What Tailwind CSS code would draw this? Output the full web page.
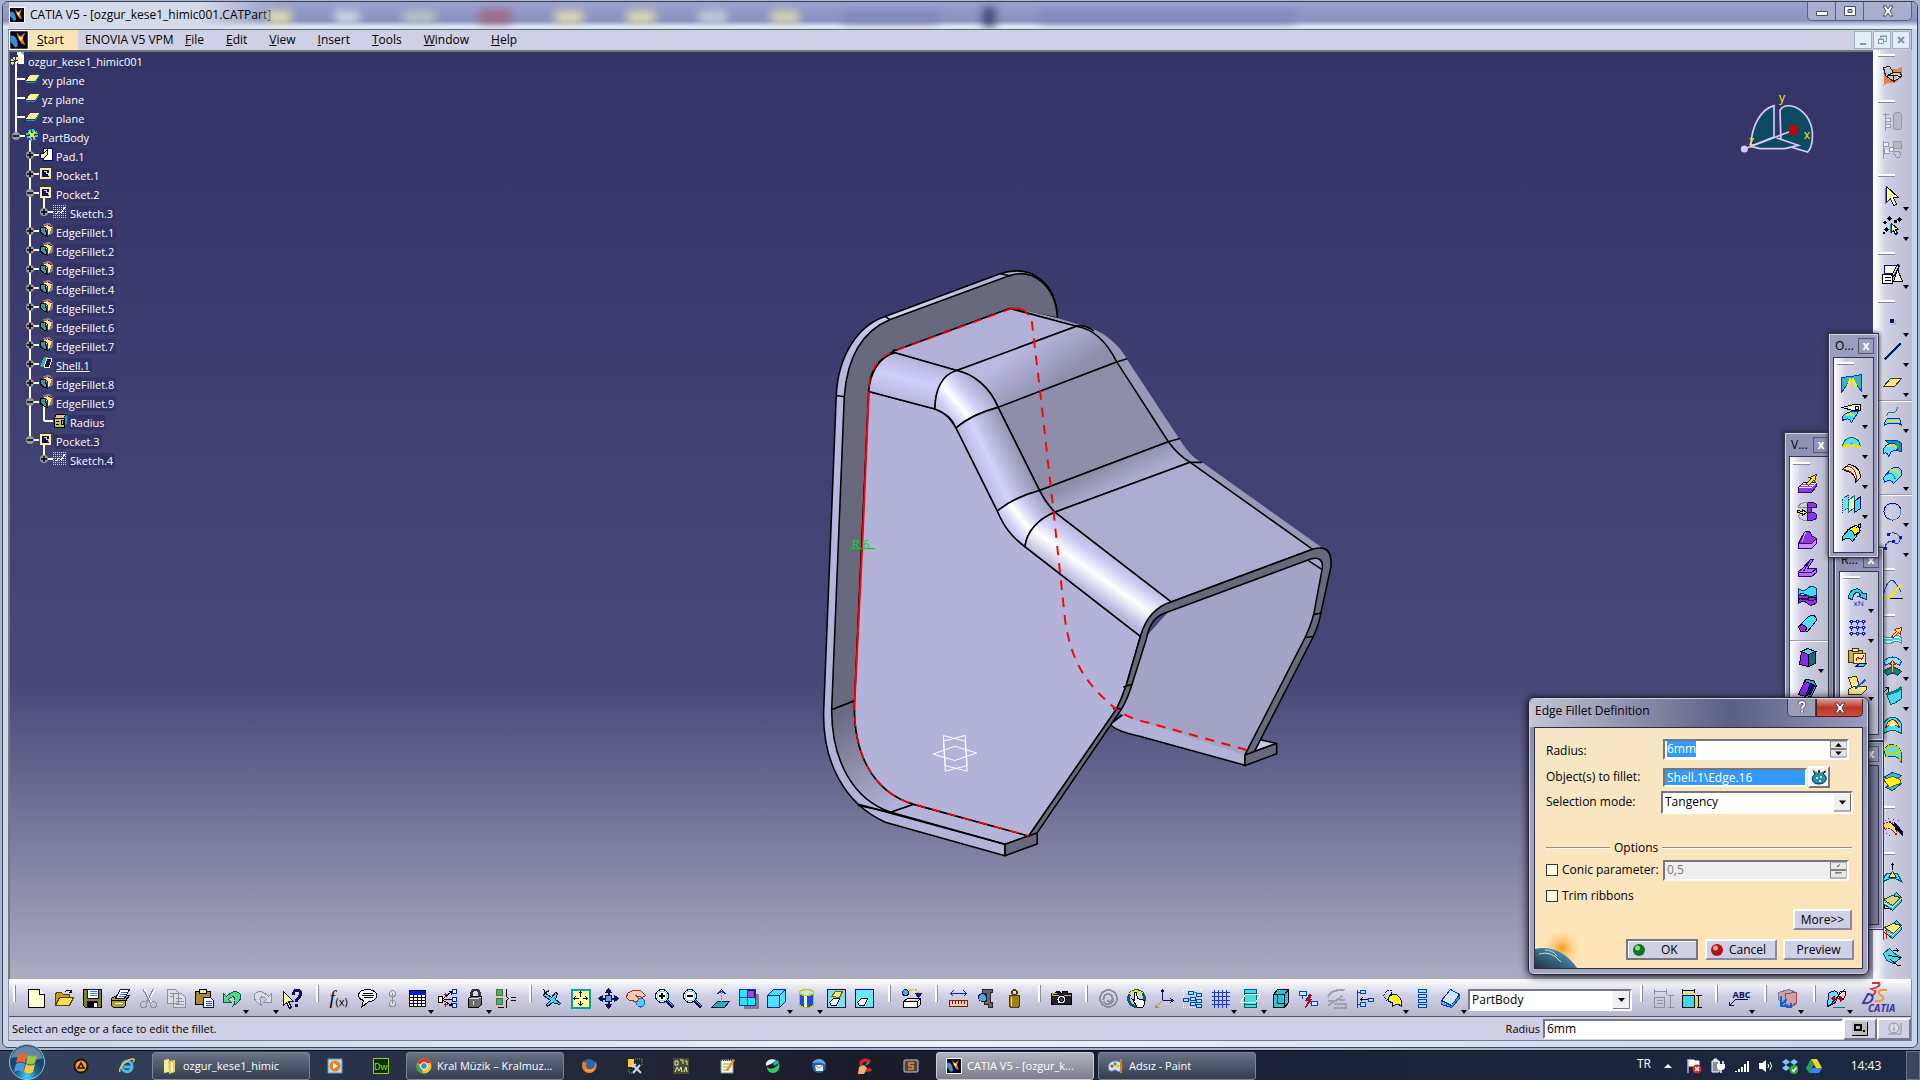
<!DOCTYPE html>
<html lang="en">
<head>
    <meta charset="UTF-8">
    <meta name="viewport" content="width=device-width, initial-scale=1.0">
    <title>CATIA V5 - [ozgur_kese1_himic001.CATPart]</title>
    <script src="https://cdn.jsdelivr.net/npm/@tailwindcss/browser@4"></script>
</head>
<body class="h-screen flex flex-col overflow-hidden bg-[#aab4cc] font-['Open_Sans','Noto_Sans',sans-serif] text-[12px] leading-4 text-black">

    <!-- application window -->
    <div class="flex-1 min-h-0 flex flex-col mx-[2px] mt-px mb-[2px] border border-[#3c4257] rounded-[6px] px-[5px] pb-[6px] bg-[#dfe8f5] bg-linear-to-r from-[#c9d6ea] via-[#eef2f8] to-[#c4d6ee]">
        <header class="h-[27px] shrink-0 -mx-[5px] pl-[6px] flex items-start overflow-hidden rounded-t-[5px] bg-linear-to-b from-[#9aa0cc] from-5% via-[#8b90c0] via-70% to-[#dbe7f6] to-90%">
            <div class="flex items-center gap-[5px] h-[26px] w-[270px] shrink-0 bg-linear-to-r from-[#d5dae8] from-70% to-transparent">
                <svg viewBox="0 0 16 16" class="size-4"><use href="#catia"/></svg>
                <h1 class="whitespace-nowrap">CATIA V5 - [ozgur_kese1_himic001.CATPart]</h1>
            </div>
            <div class="flex-1 flex items-center gap-11 h-[30px] -ml-3 blur-[5px]">
                <span class="w-6 h-3 bg-[#e8e3a8]"></span>
                <span class="w-6 h-3 bg-[#d4dbea]"></span>
                <span class="w-8 h-3 bg-[#b9c9c6]"></span>
                <span class="w-8 h-3 bg-[#a0647c]"></span>
                <span class="w-7 h-3 bg-[#e4dfb0]"></span>
                <span class="w-7 h-3 bg-[#e4dfb0]"></span>
                <span class="w-7 h-3 bg-[#c9cfdf]"></span>
                <span class="w-7 h-3 bg-[#dcd9b4]"></span>
                <span class="w-24 h-3 bg-[#7f87bb]"></span>
                <span class="w-3 h-5 bg-[#40476f]"></span>
                <span class="w-64 h-3 bg-[#8088bd]"></span>
            </div>
            <div class="flex h-[19px] mr-[5px] border border-t-0 border-[#5b6080] rounded-b-[5px] divide-x divide-[#5b6080] bg-[#a9aecf]">
                <button aria-label="Minimize" class="w-7 flex items-center justify-center"><svg viewBox="0 0 14 12" class="w-[14px] h-3"><path d="M1.500 6.500h11v4h-11z" fill="#fff" stroke="#4a4f66"/></svg></button>
                <button aria-label="Maximize" class="w-7 flex items-center justify-center"><svg viewBox="0 0 14 12" class="w-[14px] h-3"><path d="M1.500 1.500h11v9h-11zM5 4.500v3h4v-3z" fill="#fff" fill-rule="evenodd" stroke="#4a4f66"/></svg></button>
                <button aria-label="Close" class="w-[47px] flex items-center justify-center"><svg viewBox="0 0 14 12" class="w-[14px] h-3"><path d="M2 1h3l2 3 2-3h3l-3 5 3 5H9L7 8l-2 3H2l3-5z" fill="#fff" stroke="#4a4f66"/></svg></button>
            </div>
        </header>

        <nav class="h-[21px] shrink-0 flex items-center border-t border-x border-t-[#5c6b6b] border-x-[#8a90a4] bg-[#cfcfe5]">
            <svg viewBox="0 0 16 16" class="size-5"><use href="#catia"/></svg>
            <a href="#" class="h-[20px] leading-[19px] w-[49px] pl-2 bg-[#fde3b3]"><u>S</u>tart</a>
            <a href="#" class="pl-[7px] w-[96px] whitespace-nowrap">ENOVIA V5 VPM</a>
            <a href="#" class="px-[11px]"><u>F</u>ile</a>
            <a href="#" class="px-[11px]"><u>E</u>dit</a>
            <a href="#" class="px-[11px]"><u>V</u>iew</a>
            <a href="#" class="px-[11px]"><u>I</u>nsert</a>
            <a href="#" class="px-[11px]"><u>T</u>ools</a>
            <a href="#" class="px-[11px]"><u>W</u>indow</a>
            <a href="#" class="px-[11px]"><u>H</u>elp</a>
            <div class="ml-auto flex gap-px mr-px">
                <button aria-label="Minimize document" class="size-[18px] border border-[#9db0c4] bg-[#e2effb]"><svg viewBox="0 0 16 16" class="size-4"><path d="M5 12h6" stroke="#8594a8" stroke-width="2"/></svg></button>
                <button aria-label="Restore document" class="size-[18px] border border-[#9db0c4] bg-[#e2effb]"><svg viewBox="0 0 16 16" class="size-4"><path d="M6.500 6V4.500h6v5H10M4.500 7.500h5v4h-5zM6 4h7M4 7h6" fill="none" stroke="#8594a8"/></svg></button>
                <button aria-label="Close document" class="size-[18px] border border-[#9db0c4] bg-[#e2effb]"><svg viewBox="0 0 16 16" class="size-4"><path d="M5 5l6 6M11 5l-6 6" stroke="#8594a8" stroke-width="2"/></svg></button>
            </div>
        </nav>

        <div class="flex-1 min-h-0 flex">
            <main class="relative flex-1 min-w-0 border-t-2 border-l-2 border-t-[#77776c] border-l-[#77777c] bg-linear-to-b from-[#333366] via-[#484878] via-68% to-[#acacc1]">
                <ul id="tree" class="text-white text-[11px]"></ul>

                <!-- part geometry -->
                <svg viewBox="0 0 600 620" class="absolute left-[770px] top-[198px] w-[600px] h-[620px]" fill="none">
                    <defs>
                        <linearGradient id="longFillet" gradientUnits="userSpaceOnUse" x1="870" y1="750" x2="795" y2="860">
                            <stop offset="0" stop-color="#acacd3"/><stop offset=".35" stop-color="#cdcdf4"/><stop offset=".62" stop-color="#ffffff"/><stop offset="1" stop-color="#b6b6de"/>
                        </linearGradient>
                        <linearGradient id="slopeFillet" gradientUnits="userSpaceOnUse" x1="505" y1="565" x2="625" y2="505">
                            <stop offset="0" stop-color="#b3b3da"/><stop offset=".4" stop-color="#d2d2fa"/><stop offset="1" stop-color="#9292b0"/>
                        </linearGradient>
                        <linearGradient id="topFillet" gradientUnits="userSpaceOnUse" x1="350" y1="270" x2="320" y2="385">
                            <stop offset="0" stop-color="#b1b1d8"/><stop offset=".5" stop-color="#cfcffa"/><stop offset="1" stop-color="#b3b3da"/>
                        </linearGradient>
                        <linearGradient id="bend" gradientUnits="userSpaceOnUse" x1="640" y1="245" x2="710" y2="345">
                            <stop offset="0" stop-color="#b8b8e0"/><stop offset="1" stop-color="#8f8fad"/>
                        </linearGradient>
                        <linearGradient id="concave" gradientUnits="userSpaceOnUse" x1="860" y1="545" x2="885" y2="600">
                            <stop offset="0" stop-color="#8e8eab"/><stop offset="1" stop-color="#acacd0"/>
                        </linearGradient>
                        <linearGradient id="shine" gradientUnits="userSpaceOnUse" x1="525" y1="335" x2="415" y2="430">
                            <stop offset="0" stop-color="#a6a6ca"/><stop offset=".35" stop-color="#d0d0f8"/><stop offset=".55" stop-color="#ffffff"/><stop offset=".75" stop-color="#d0d0f8"/><stop offset="1" stop-color="#b3b3da"/>
                        </linearGradient>
                        <linearGradient id="shine2" gradientUnits="userSpaceOnUse" x1="700" y1="635" x2="590" y2="725">
                            <stop offset="0" stop-color="#9c9cbe"/><stop offset=".35" stop-color="#cacaf2"/><stop offset=".58" stop-color="#ffffff"/><stop offset=".78" stop-color="#cecef6"/><stop offset="1" stop-color="#b3b3da"/>
                        </linearGradient>
                        <linearGradient id="foot" gradientUnits="userSpaceOnUse" x1="165" y1="1170" x2="300" y2="1410">
                            <stop offset="0" stop-color="#6a6a80"/><stop offset="1" stop-color="#b3b3da"/>
                        </linearGradient>
                        <linearGradient id="rim" gradientUnits="userSpaceOnUse" x1="150" y1="1100" x2="400" y2="60">
                            <stop offset="0" stop-color="#b3b3da"/><stop offset=".78" stop-color="#b8b8e0"/><stop offset=".9" stop-color="#d4d4fc"/><stop offset="1" stop-color="#b4b4da"/>
                        </linearGradient>
                    </defs>
                    <g transform="scale(.38265 .39541)" stroke="#000" stroke-width="4" stroke-linejoin="round">
                        <!-- flange -->
                        <path d="M588 1532L275 1447C165 1400 112 1290 114 1170L147 368C152 265 205 190 275 168L575 60C655 35 722 80 725 172L650 240 200 400 350 1402 588 1503z" fill="url(#rim)"/>
                        <path d="M135 1163L168 370C176 270 215 205 288 176L590 68C660 40 720 90 725 172L605 148 300 255C245 280 232 320 232 358L195 1140z" fill="#69697e"/>
                        <path d="M135 1163C135 1290 190 1390 290 1422L350 1402C240 1370 190 1270 195 1140z" fill="url(#foot)"/>
                        <path d="M205 1405L290 1422 588 1503 650 1482 350 1402 290 1422z" fill="#b4b4da"/>
                        <path d="M205 1402L588 1503v29M147 368l21 3M275 168l12 8M575 60l30 6"/>
                        <path d="M588 1503L672 1474v28L588 1532z" fill="#69697e"/>
                        <!-- inside and right foot -->
                        <path d="M862 1200C880 1215 900 1220 940 1230L1215 1303V1260L930 1150z" fill="#b2b2d8"/>
                        <path d="M1215 1277L1252 1238 1298 1248 1215 1277z" fill="#c8c8ea"/>
                        <path d="M1215 1277L1298 1248V1274L1215 1304z" fill="#69697e"/>
                        <path d="M1015 915L1390 780C1415 775 1420 790 1417 806L1395 920C1390 950 1380 975 1370 985L1215 1277 960 1197C920 1190 900 1180 870 1160L920 1098 950 985z" fill="#a3a3c6" stroke="none"/>
                        <!-- right hand rounded edge -->
                        <path d="M605 148L650 155 725 172 795 193C850 205 890 245 907 277L1045 480C1065 510 1080 527 1103 537L1415 752 1392 757 1072 537C1045 520 1030 505 1015 485L880 283C860 240 820 200 775 193z" fill="#9898b8" stroke="none"/>
                        <path d="M770 193L620 152M770 193C795 188 815 200 820 205M880 283L907 275M1015 485L1045 477M1072 537L1103 537"/>
                        <!-- faces -->
                        <path d="M300 260C290 255 300 250 300 255L600 148 775 193 462 305z" fill="#b1b1d8"/>
                        <path d="M462 305L775 193C820 200 855 235 880 283L570 398C550 350 510 315 462 305z" fill="url(#bend)"/>
                        <path d="M570 398L880 283 1015 485 678 608z" fill="#8e8eab"/>
                        <path d="M678 608L1015 485C1030 505 1045 522 1072 537L718 663C700 645 688 628 678 608z" fill="url(#concave)"/>
                        <path d="M718 663L1072 537 1392 757 1022 890z" fill="#acacd1"/>
                        <path d="M232 358L405 402C440 415 450 435 460 450L568 660C590 705 610 728 640 750L942 977 905 1100C895 1130 885 1150 880 1160L650 1482 350 1402C240 1370 190 1270 195 1140z" fill="#b3b3da"/>
                        <path d="M232 358C235 310 260 270 300 260L462 305C420 320 405 360 405 402z" fill="url(#topFillet)"/>
                        <path d="M462 305C510 315 550 350 570 398 530 408 490 425 460 450 450 425 430 410 405 402 405 350 425 315 462 305z" fill="url(#shine)"/>
                        <path d="M460 450C490 425 530 408 570 398L678 608C640 618 600 635 568 660z" fill="url(#slopeFillet)"/>
                        <path d="M568 660C600 635 640 618 678 608 688 628 700 645 718 663 675 680 645 712 640 750 605 725 585 700 568 660z" fill="url(#shine2)"/>
                        <path d="M640 750C645 712 675 680 718 663L1022 890C980 910 955 940 942 977z" fill="url(#longFillet)"/>
                        <!-- wall section -->
                        <path d="M650 1482L880 1160C895 1130 900 1115 905 1100L942 977C955 930 985 900 1022 890L1392 757C1430 745 1442 765 1440 800L1413 920C1408 950 1400 965 1390 985L1240 1268 1215 1277 1370 985C1385 955 1390 940 1395 920L1417 806C1420 785 1410 775 1385 782L1015 915C980 925 965 945 957 985L920 1098C910 1130 905 1140 893 1160L672 1474z" fill="#69697e"/>
                        <path d="M897 1105l24-7M870 1160l24 0M1395 922l20-4M1375 980l20-3M1380 785l35 22"/>
                        <!-- selected edge -->
                        <path d="M605 148L300 255C245 275 232 320 232 358M195 1140C190 1270 240 1370 350 1402L650 1482" stroke="#f00" stroke-dasharray="24 18"/>
                        <path d="M232 358L215 750 195 1140" stroke="#f00" stroke-width="5"/>
                        <path d="M605 148C625 145 640 150 650 165" stroke="#f00"/>
                        <path d="M658 180L680 360 715 663 745 935C760 1040 800 1100 880 1162 900 1178 930 1188 960 1195L1240 1270" stroke="#f00" stroke-width="5" stroke-dasharray="24 20"/>
                        <!-- origin planes -->
                        <path d="M427 1228L484 1242 489 1318 432 1304zM484 1228L427 1242 432 1318 489 1304zM400 1275L457 1255 514 1272 457 1291z" stroke="#fff" stroke-width="2.500"/>
                        <path d="M183 755h65" stroke="#0c0" stroke-width="3"/>
                    </g>
                    <text x="72" y="299" fill="#00e000" font-size="12">R 6</text>
                </svg>

                <!-- compass -->
                <svg viewBox="780 265 222 195" class="absolute right-[59px] top-9 w-[74px] h-[65px] overflow-visible" fill="none" stroke="#d9c8ff" stroke-width="5">
                    <path d="M882 318V412L812 440C815 380 840 330 882 318zM900 332C910 315 930 317 945 322 985 340 1000 380 997 415 996 435 990 450 983 457L903 433z" fill="#0c4a60"/>
                    <path d="M812 440L840 447H915L955 437 890 415" fill="#0c4a60"/>
                    <path d="M793 448L940 392"/>
                    <circle cx="793" cy="448" r="8" fill="#d9c8ff"/>
                    <path d="M927 377h26v28h-26z" fill="#c80000" stroke="none"/>
                    <g fill="#ffe800" stroke="none" font-size="36"><text x="897" y="307">y</text><text x="971" y="417">x</text><text x="806" y="435">z</text></g>
                </svg>
            </main>
            <aside data-tools="| workbench | catalog catalog2 | select* trap* | sketcher* | dot* line* plane* - sweep* blend loft* - circle* spline* | curve | extrude* offset* join* dome dome2 slab | burn | push thick thick2 fold" data-dir="col" class="w-[39px] shrink-0 flex flex-col border-l-2 border-[#fff] bg-linear-to-r from-white via-[#cfcfe5] via-30% to-[#bcbcd2]"></aside>
        </div>

        <footer class="shrink-0 border-x border-[#8a90a4]">
            <div class="h-[38px] pt-1 flex items-center border-b border-[#55555f] bg-linear-to-b from-white via-[#cfcfe5] via-45% to-[#b6b6cc]">
                <div data-tools="| new open save print cut copy paste undo* redo* help | formula comment scale. table* relations lock* law | fly fit pan rotate zoomin zoomout normal multi cube* shading* hide swap | apply | measure caliper weight | camera | update touch axis struct grid* section* solid link unlink insert surface* list body*" data-dir="row" class="flex pl-1"></div>
                <div class="ml-px w-[164px] h-[22px] flex border-2 border-t-[#77778a] border-l-[#77778a] border-b-white border-r-white bg-white">
                    <select aria-label="Current body" class="flex-1 appearance-none pl-[2px] outline-none"><option>PartBody</option></select>
                    <svg viewBox="0 0 17 18" class="w-[17px] h-[18px]"><path d="M0 0h17v18H0z" fill="#f0f0f4"/><path d="M0 17.500h16.500V0" fill="none" stroke="#77778a"/><path d="M5 7h7l-3.500 4z"/></svg>
                </div>
                <div data-tools="| dimtable dims | text* | views* | analysis*" data-dir="row" class="flex ml-2"></div>
                <svg viewBox="0 0 42 34" class="ml-auto mr-2 -mt-1 w-[42px] h-[34px] shrink-0"><path d="M11 2h7c2 3-3 5-7 6 6 2 3 5-1 7" fill="none" stroke="#e02c34" stroke-width="2"/><path d="M7 13L2 22c9 2 14-9 5-9z" fill="none" stroke="#3a3a9a" stroke-width="2"/><path d="M26 9c-11-1-9 4-5 6 3 3 0 6-7 5" fill="none" stroke="#f59a1e" stroke-width="2"/><text x="7" y="31" font-size="10" font-weight="bold" font-style="italic" fill="#34349a">CATIA</text></svg>
            </div>
            <div class="h-6 flex items-center border-b border-[#77778a] bg-[#cfcfe5]">
                <p class="pl-[3px] flex-1 text-[11px]">Select an edge or a face to edit the fillet.</p>
                <label for="power" class="mr-[3px] text-[11px]">Radius</label>
                <input id="power" value="6mm" class="w-[300px] h-[20px] px-[2px] border-2 border-t-[#77778a] border-l-[#77778a] border-b-white border-r-white bg-white">
                <button aria-label="Power input" class="w-[34px] h-[22px] flex items-center justify-center border-2 border-white border-r-[#77778a] border-b-[#77778a]"><svg viewBox="0 0 16 14" class="w-4 h-[14px]"><path d="M0 0h16v14H0z" fill="#bcbcb8"/><path d="M0 13.500h15.500V0" stroke="#000" fill="none"/><path d="M3 3h6v5H3zM11 9h2" fill="none" stroke="#000" stroke-width="2"/></svg></button>
                <button aria-label="Info" class="w-[34px] h-[22px] flex items-center justify-center border-2 border-white border-r-[#77778a] border-b-[#77778a]"><svg viewBox="0 0 16 14" class="w-4 h-[14px]"><circle cx="8" cy="6" r="5" fill="#dcdce4" stroke="#8f8f9f"/><path d="M8 5v4M8 2.500v1M2 12h13V1" stroke="#8f8f9f" fill="none"/></svg></button>
            </div>
        </footer>
    </div>

    <!-- floating palettes -->
    <section class="absolute left-[1784px] top-[432px] w-[50px] h-[300px] border border-[#33364c] px-1 pt-px bg-[#8f92b5] shadow-[inset_0_0_0_1px_#d0d4e4,0_0_5px_#222]">
        <div class="h-[22px] flex items-center justify-between pl-[2px]"><h2>V...</h2><button aria-label="Close" class="size-4 border border-[#55586c] text-white leading-3 font-bold">x</button></div>
        <div data-tools="| pad revolve multi3 rib stack cyl - prism* shellsolid" data-dir="col" class="h-[272px] pt-px border border-[#33364c] bg-linear-to-r from-white via-[#cfcfe5] via-30% to-[#bcbcd2] flex flex-col"></div>
    </section>
    <section class="absolute left-[1850px] top-[741px] w-[34px] h-[189px] border border-[#33364c] px-1 pt-px bg-[#8f92b5] shadow-[inset_0_0_0_1px_#d0d4e4]">
        <div class="h-[22px] flex items-center justify-end"><button aria-label="Close" class="size-4 border border-[#55586c] text-white leading-3 font-bold">x</button></div>
        <div class="h-[160px] border border-[#33364c] bg-[#77779a]"></div>
    </section>
    <section class="absolute left-[1834px] top-[547px] w-[50px] h-[194px] border border-[#33364c] px-1 pt-px bg-[#8f92b5] shadow-[inset_0_0_0_1px_#d0d4e4,0_0_5px_#222]">
        <div class="h-[22px] flex items-center justify-between pl-[2px]"><h2>R...</h2><button aria-label="Close" class="size-4 border border-[#55586c] text-white leading-3 font-bold">x</button></div>
        <div data-tools="| repeat* pattern* clipboard powercopy*" data-dir="col" class="h-[164px] border border-[#33364c] bg-linear-to-r from-white via-[#cfcfe5] via-30% to-[#bcbcd2] flex flex-col"></div>
    </section>
    <section class="absolute left-[1828px] top-[333px] w-[51px] h-[225px] border border-[#33364c] px-1 pt-px bg-[#9a9dc0] shadow-[inset_0_0_0_1px_#d0d4e4,0_0_5px_#222]">
        <div class="h-[22px] flex items-center justify-between pl-[2px]"><h2>O...</h2><button aria-label="Close" class="size-4 border border-[#55586c] text-white leading-3 font-bold">x</button></div>
        <div data-tools="| heal* split* boundary* fillet* translate* extrapolate" data-dir="col" class="h-[196px] border border-[#33364c] bg-linear-to-r from-white via-[#cfcfe5] via-30% to-[#bcbcd2] flex flex-col"></div>
    </section>

    <!-- edge fillet dialog -->
    <form class="absolute left-[1528px] top-[697px] w-[341px] h-[278px] flex flex-col rounded-[6px] border border-[#20233a] px-[5px] pb-[5px] bg-linear-to-b from-[#8185a6] via-[#9fa3c2] via-40% to-[#a2a5c4] shadow-[inset_0_0_0_1px_#cfd3e4,0_1px_8px_#000]">
        <div class="h-7 shrink-0 flex items-start rounded-t-[5px] bg-linear-to-r from-[#c4c6d4] via-[#5b5e85] via-60% to-[#9a9dbf] -mx-1 mt-px">
            <h2 class="flex-1 pl-[5px] leading-[24px]">Edge Fillet Definition</h2>
            <button type="button" aria-label="Help" class="w-[29px] h-[18px] border border-t-0 border-[#3d405a] rounded-bl-[5px] bg-[#9b9db8] flex justify-center"><svg viewBox="0 0 12 14" class="w-3 h-[15px]"><path d="M3.500 5C3 1.500 9 1.500 8.500 5 8.500 7 6 7 6 9M6 11v2" fill="none" stroke="#44475c" stroke-width="3.500"/><path d="M3.500 5C3 1.500 9 1.500 8.500 5 8.500 7 6 7 6 9M6 11v2" fill="none" stroke="#fff" stroke-width="2"/></svg></button>
            <button type="button" aria-label="Close" class="w-[47px] h-[18px] mr-[4px] border border-t-0 border-[#4d1c20] rounded-br-[5px] bg-linear-to-b from-[#d99a92] via-[#b8352a] via-50% to-[#c9503c] flex justify-center items-center"><svg viewBox="0 0 14 12" class="w-[14px] h-3"><path d="M2 1h3l2 3 2-3h3l-3 5 3 5H9L7 8l-2 3H2l3-5z" fill="#fff" stroke="#5a3038"/></svg></button>
        </div>
        <div class="flex-1 min-h-0 flex flex-col border border-[#2c2c3a] bg-linear-to-b from-[#f6e6c6] to-[#ffe4b6] pl-[11px] pr-2 pt-[10px]">
            <div class="h-[22px] flex items-center">
                <label for="radius" class="w-[117px] pt-1">Radius:</label>
                <div class="w-[186px] h-[21px] flex border-2 border-t-[#77777a] border-l-[#77777a] border-b-white border-r-white bg-white">
                    <input id="radius" value="6mm" class="flex-1 min-w-0 px-[2px] outline-none selection:bg-[#3399ff] selection:text-white">
                    <svg viewBox="0 0 18 18" class="w-[18px]"><use href="#spin"/></svg>
                </div>
            </div>
            <div class="h-[26px] mt-[4px] flex items-center">
                <label for="objects" class="w-[117px]">Object(s) to fillet:</label>
                <input id="objects" value="Shell.1\Edge.16" class="w-[144px] h-[19px] px-[2px] border-2 border-t-[#77777a] border-l-[#77777a] border-b-white border-r-white bg-[#3399ff] text-white">
                <button type="button" aria-label="Element list" class="ml-px size-[22px] flex items-center justify-center border-2 border-t-white border-l-white border-r-[#77777a] border-b-[#77777a] bg-[#f4f4f8]"><svg viewBox="0 0 16 16" class="size-4"><path d="M2 1l5 3 1-3 1 3 6-2-3 3c6 3 3 10-4 10S-1 9 4 5z" fill="#1496b4" stroke="#10105a"/><path d="M2 1l5 3M13 2l-4 2" stroke="#f0e040"/><path d="M5 8h2v2H5zM9 7h2v2H9zM8 11h2v2H8z" fill="#ffe860"/></svg></button>
            </div>
            <div class="h-[24px] flex items-center">
                <label for="mode" class="w-[115px]">Selection mode:</label>
                <div class="w-[192px] h-[23px] flex border-2 border-t-[#77777a] border-l-[#77777a] border-b-white border-r-white bg-white">
                    <select id="mode" class="flex-1 appearance-none pl-[2px] outline-none"><option>Tangency</option></select>
                    <svg viewBox="0 0 17 18" class="w-[17px] h-[19px]"><path d="M0 0h17v18H0z" fill="#f0f0f0"/><path d="M0 17.500h16.500V0" fill="none" stroke="#666"/><path d="M5 7h7l-3.500 4z"/></svg>
                </div>
            </div>
            <div class="mt-[26px] h-4 flex items-center gap-1">
                <span class="w-16 h-[2px] border-t border-[#8e8e92] bg-white"></span>Options<span class="flex-1 h-[2px] mr-[2px] border-t border-[#8e8e92] bg-white"></span>
            </div>
            <div class="h-[26px] mt-px flex items-center">
                <input id="conic" type="checkbox" class="appearance-none size-3 border border-[#333] bg-[#ffffe0]">
                <label for="conic" class="w-[105px] pl-1 whitespace-nowrap">Conic parameter:</label>
                <div class="w-[186px] h-[21px] flex border-2 border-t-[#77777a] border-l-[#77777a] border-b-white border-r-white bg-[#efefef]">
                    <input aria-label="Conic value" value="0,5" disabled class="flex-1 min-w-0 px-[2px] text-[#7a7a7a]">
                    <svg viewBox="0 0 18 18" class="w-[18px]"><use href="#spinoff"/></svg>
                </div>
            </div>
            <div class="h-[26px] flex items-center">
                <input id="trim" type="checkbox" class="appearance-none size-3 border border-[#333] bg-[#ffffe0]">
                <label for="trim" class="pl-1">Trim ribbons</label>
            </div>
            <button type="button" class="self-end mr-[2px] w-[59px] h-[21px] border-2 border-t-white border-l-white border-r-[#8a8aa8] border-b-[#8a8aa8] bg-[#cfcfe5] leading-4">More&gt;&gt;</button>
            <div class="mt-auto flex items-start -ml-[11px] h-[29px]">
                <svg viewBox="0 0 46 36" class="self-end w-[46px] h-9 mr-auto shrink-0"><defs><radialGradient id="sun"><stop offset="0" stop-color="#f79a1c"/><stop offset="1" stop-color="#ffe0a0" stop-opacity="0"/></radialGradient><linearGradient id="earth" x1="0" y1="1" x2="1" y2="0"><stop offset="0" stop-color="#24303c"/><stop offset="1" stop-color="#4fb4dc"/></linearGradient></defs><circle cx="27" cy="16" r="20" fill="url(#sun)"/><path d="M0 17c16-4 32 4 42 19H0z" fill="url(#earth)"/><path d="M4 22q12-4 22 8M10 18q8 0 12 6" fill="none" stroke="#b8dcec"/></svg>
                <button type="button" class="w-[72px] h-[21px] mr-[7px] flex items-center pl-[5px] gap-4 border-2 border-[#77777f] bg-[#cfcfe5] shadow-[inset_1px_1px_0_#fff]"><svg viewBox="0 0 12 12" class="size-3"><circle cx="6" cy="6" r="6" fill="#0b7a18"/><circle cx="4.500" cy="4" r="2.500" fill="#7ee070"/></svg>OK</button>
                <button type="button" class="w-[72px] h-[21px] mr-[6px] flex items-center pl-[4px] gap-[6px] border-2 border-t-white border-l-white border-r-[#8a8aa8] border-b-[#8a8aa8] bg-[#cfcfe5]"><svg viewBox="0 0 12 12" class="size-3"><circle cx="6" cy="6" r="6" fill="#b01414"/><circle cx="4.500" cy="4" r="2.500" fill="#ffa090"/></svg>Cancel</button>
                <button type="button" class="w-[71px] h-[21px] border-2 border-t-white border-l-white border-r-[#8a8aa8] border-b-[#8a8aa8] bg-[#cfcfe5] leading-4">Preview</button>
            </div>
        </div>
    </form>

    <!-- taskbar -->
    <div class="h-[30px] shrink-0 flex items-center pl-2 border-t border-[#0c101c] bg-linear-to-r from-[#33425f] via-[#1b1c2a] via-45% to-[#1b2a44] text-white">
        <button aria-label="Start menu" class="size-[38px] -mt-2 mr-[14px] shrink-0"><svg viewBox="0 0 38 38" class="size-[38px]"><defs><radialGradient id="orb" cy=".9"><stop offset="0" stop-color="#38d8f8"/><stop offset=".6" stop-color="#1c6494"/><stop offset="1" stop-color="#16466e"/></radialGradient></defs><circle cx="19" cy="19" r="17.500" fill="url(#orb)" stroke="#9cc0d8"/><path d="M3 15C8-1 30-1 35 15 25 20 13 12 3 15z" fill="#fff" opacity=".35"/><path d="M10 12c3-2 6-2 9 0l-2 8c-3-2-6-2-9 0z" fill="#f0642c"/><path d="M20 12c3 2 6 2 9 0l-2 8c-3 2-6 2-9 0z" fill="#9cc83c"/><path d="M8 21c3-2 6-2 9 0l-2 8c-3-2-6-2-9 0z" fill="#4c9ce0"/><path d="M18 21c3 2 6 2 9 0l-2 8c-3 2-6 2-9 0z" fill="#fcc838"/></svg></button>
        <div id="tasks" class="flex gap-1 h-[28px] text-[11px]"></div>
        <div class="ml-auto flex items-center gap-2 h-full">
            <span class="mr-[5px] -mt-1">TR</span>
            <svg viewBox="0 0 8 8" class="size-2 mr-[6px]"><path d="M0 6l4-4 4 4z" fill="#fff"/></svg>
            <svg viewBox="0 0 16 16" class="size-4"><path d="M2 1v14M3 2h5l1 1h4v6H8L7 8H3z" stroke="#fff" fill="#fff"/><circle cx="11" cy="11" r="4.500" fill="#d82424"/><path d="M9 9l4 4M13 9l-4 4" stroke="#fff" stroke-width="1.500"/></svg>
            <svg viewBox="0 0 16 16" class="size-4"><path d="M2 3h7v11H2zM4 1h3v2H4z" stroke="#fff" fill="#8890a0"/><path d="M7 6h8v4l-2 2h-4l-2-2z" fill="#fff"/><path d="M9 6V3M13 6V3M11 12v3" stroke="#fff" stroke-width="1.500" fill="none"/></svg>
            <svg viewBox="0 0 16 16" class="size-4"><path d="M1 13h2v1H1zM4 11h2v3H4zM7 9h2v5H7zM10 6h2v8h-2zM13 3h2v11h-2z" fill="#fff"/></svg>
            <svg viewBox="0 0 16 16" class="size-4"><path d="M1 5h3l4-3v12l-4-3H1z" fill="#fff"/><path d="M10 6q1.500 2 0 4M12 4q3 4 0 8" stroke="#fff" fill="none"/></svg>
            <svg viewBox="0 0 16 16" class="size-4"><path d="M4 1l4 3-4 3-4-3zM12 1l4 3-4 3-4-3zM4 7l4 3-4 3-4-3zM12 7l4 3-4 3-4-3z" fill="#7cc8f8"/><circle cx="12" cy="11.500" r="4.500" fill="#2ca83c"/><path d="M10 11.500l1.500 2 3-4" stroke="#fff" stroke-width="1.500" fill="none"/></svg>
            <svg viewBox="0 0 16 16" class="size-4"><path d="M5 1h6l5 9h-6z" fill="#fcd024"/><path d="M5 1l3 5-5 9-3-5z" fill="#1ca464"/><path d="M3 15l3-5h10l-3 5z" fill="#4482f0"/></svg>
            <time class="w-[56px] ml-2 mr-1 text-center">14:43</time>
            <span class="w-[14px] h-full border border-[#6a7488] bg-[#3a465e]"></span>
        </div>
    </div>

    <svg class="hidden">
        <symbol id="catia" viewBox="0 0 16 16"><path d="M0 0h16v16H0z" fill="#fff"/><path d="M1 1h14v14H1z" fill="#04041c"/><path d="M1 5c3-2 6 2 6 8L5 14 1 9z" fill="#3a90d0"/><path d="M6 2l3 3 4-3-2 5 2 5-3-1-3-5z" fill="#e87020"/><path d="M8 5l3 1-1 3-2-2z" fill="#ffe890"/></symbol>
        <symbol id="spin" viewBox="0 0 18 18"><path d="M1 0h17v8H1zM1 9h17v8H1z" fill="#e4e4e4" stroke="#777"/><path d="M6 6h7L9.500 2zM6 11h7l-3.500 4z"/></symbol>
        <symbol id="spinoff" viewBox="0 0 18 18"><path d="M1 0h17v8H1zM1 9h17v8H1z" fill="#e8e8e8" stroke="#777"/><path d="M8 5l3-2M6 11.500h7" stroke="#333"/></symbol>
    </svg>

    <script>
        // 20x20 toolbar glyphs, default stroke is navy
        const icons = {
            new: '<path d="M2 1h11l5 5v13H2z" fill="#ffffd0" stroke="#000"/><path d="M13 1v5h5" fill="#fff" stroke="#000"/>',
            open: '<path d="M1 17V6l1-2h5l2 2h6v4" fill="#c89a18" stroke="#5c4400"/><path d="M1 17l4-8h14l-4 8z" fill="#ffdc50" stroke="#5c4400"/><path d="M11 3q4-3 6 1m0-3v3h-3" stroke="#000"/>',
            save: '<path d="M1 1h18v18H3l-2-2z" fill="#80801c" stroke="#000"/><path d="M5 1h11v9H5z" fill="#fff"/><path d="M7 3h7M7 5h7M7 7h7" stroke="#3a80e0"/><path d="M5 13h10v6H5z" fill="#000"/><path d="M11 14h3v4h-3z" fill="#fff" stroke="none"/>',
            print: '<path d="M1 10l5-3h13l-4 6v4l-2 2H3l-2-2z" fill="#a8a030" stroke="#000"/><path d="M5 10l5-9h9l-5 9z" fill="#fff"/><path d="M10 4h6M9 6h6M8 8h6" stroke="#3a60f0"/><path d="M1 12h14l4-5" stroke="#000"/><path d="M4 15h8" stroke="#ffffa0"/>',
            cut: '<g stroke="#8e8e9a"><path d="M5 1l7 13M15 1L8 14" stroke-width="2"/><circle cx="5" cy="16" r="3"/><circle cx="15" cy="16" r="3"/></g><path d="M6 1l7 13M16 1l-4 8" stroke="#fff"/>',
            copy: '<path d="M1 1h8l3 3v11H1zM7 5h8l4 4v10H7z" fill="#dcdce8" stroke="#8e8e9a"/><path d="M3 5h5M3 8h3M9 10h6M9 13h8M9 16h8" stroke="#8e8e9a"/>',
            paste: '<path d="M1 3h15v13H1z" fill="#a88c2c" stroke="#000"/><path d="M5 1h7v4H5z" fill="#e8e8a0" stroke="#000"/><path d="M9 9h7l3 3v7H9z" fill="#fff"/><path d="M11 13h6M11 15h6M11 17h6" stroke="#2040f0"/>',
            undo: '<path d="M1 5v9h8l-3-3c4-5 9-3 5 6 9-5 10-13 2-14-4 0-7 3-9 5z" fill="#50d890" stroke="#045c3c"/>',
            redo: '<path d="M19 5v9h-8l3-3C10 6 5 8 9 17 0 12-1 4 7 3c4 0 7 3 9 5z" fill="#dcdce8" stroke="#8e8e9a"/>',
            help: '<path d="M1 3v14l3-3 3 6 2-1-3-6h5z" fill="#ffff90"/><path d="M11 6C11 0 19 0 18 6c0 3-4 3-4 7M14 15v3" stroke-width="3"/>',
            formula: '<text x="0" y="15" font-size="19" font-style="italic" fill="#000" stroke="none" font-family="Liberation Serif">f</text><text x="6" y="17" font-size="11" fill="#000" stroke="none">(x)</text>',
            comment: '<path d="M10 1c12 0 12 12 1 12l-7 6 2-7C-3 9 1 1 10 1z" fill="#fff" stroke="#000"/><path d="M5 5h10M4 7h12M6 9h9" stroke="#000"/>',
            scale: '<g stroke="#8e8e9a" fill="#dcdce8"><circle cx="10" cy="5" r="3"/><circle cx="10" cy="15" r="3"/><path d="M10 4v11"/></g>',
            table: '<path d="M2 2h16v16H2z" fill="#fff" stroke="#000"/><path d="M2 4h16" stroke="#0018e8" stroke-width="4"/><path d="M2 9h16M2 12h16M2 15h16M6 6v12M10 6v12M14 6v12" stroke="#000"/>',
            relations: '<path d="M1 8h4v6H1z" fill="#ffff90" stroke="#000"/><path d="M6 10l8-7M6 11h8M6 12l8 5M11 3h3v3M11 17h3v-3" stroke="#000"/><path d="M15 1h4v4h-4zM15 9h4v4h-4zM15 15h4v4h-4z" fill="#fff" stroke="#0020f0"/><path d="M8 4v4M6 6h4M8 14v4M6 16h4" stroke="#e00000"/>',
            lock: '<path d="M6 9V5c0-5 8-5 8 0v4" stroke="#333" stroke-width="2.500"/><path d="M3 10l3-2h10v8l-3 3H3z" fill="#6c6c6c" stroke="#000"/><path d="M8 12v4M3 10h10l3-2" stroke="#ddd"/>',
            law: '<path d="M1 1h6v6H1zM1 10h6v6H1z" fill="#20b8a8" stroke="#7a6410"/><path d="M10 1h1v7l2 2-2 2v7h-1M15 9h5M15 12h5M2 19h6" stroke="#000"/>',
            fly: '<path d="M2 4l7 5 4-5 2 1-2 6 5 4-1 1-7-2-5 4-1-2 4-4-7-5z" fill="#30d8e8"/><path d="M1 1l2 3M1 7l2-3 4-2" stroke="#000"/>',
            fit: '<path d="M1 1h18v18H1z" fill="#ffff90" stroke="#00a0a8" stroke-width="2"/><path d="M10 3v5M8 5l2-2 2 2M10 17v-5M8 15l2 2 2-2M3 10h5M5 8l-2 2 2 2M17 10h-5M15 8l2 2-2 2" stroke="#000"/>',
            pan: '<path d="M10 1v18M1 10h18" stroke-width="2"/><path d="M10 0l3 4H7zM10 20l3-4H7zM0 10l4-3v6zM20 10l-4-3v6z" fill="#10105a"/><path d="M7 7h6v6H7z" fill="#58a8d8"/>',
            rotate: '<circle cx="14" cy="14" r="4.500" fill="#4cd0f8" stroke="#2060c0"/><path d="M1 5l5-3h8l5 5-3 2-7-2 3 3-1 3-8-1-3-3z" fill="#f8c8b0" stroke="#8c3818"/>',
            zoomin: '<circle cx="7.500" cy="7.500" r="6.500" fill="#fff"/><circle cx="7.500" cy="7.500" r="5" stroke="#60d8f0"/><path d="M4.500 7.500h6M7.500 4.500v6" stroke="#000" stroke-width="2"/><path d="M12 12l7 7" stroke-width="3.500"/><path d="M13 12l6 6" stroke="#40c8e0"/>',
            zoomout: '<circle cx="7.500" cy="7.500" r="6.500" fill="#fff"/><circle cx="7.500" cy="7.500" r="5" stroke="#60d8f0"/><path d="M4.500 7.500h6" stroke="#000" stroke-width="2"/><path d="M12 12l7 7" stroke-width="3.500"/><path d="M13 12l6 6" stroke="#40c8e0"/>',
            normal: '<path d="M1 19l6-6h12l-5 6z" fill="#20b0b0"/><path d="M11 14V4" stroke="#d08000" stroke-dasharray="2 1"/><path d="M7 5l4-4 4 4-4-2z" fill="#ffff60" stroke="#2020d0"/>',
            multi: '<path d="M5 5h15v15H5z" fill="#7c7c90" stroke="none"/><path d="M1 1h16v16H1z" fill="#20e8f8" stroke="#0030d0"/><path d="M9 2h7v7H9z" fill="#b840c8"/><path d="M9 1v16M1 9h16" stroke="#0030d0"/>',
            cube: '<path d="M1 7l6-6h12v12l-6 6H1z" fill="#50e0f8" stroke="#0020e8"/><path d="M1 7h12v12M13 7l6-6" stroke="#0020e8"/>',
            shading: '<path d="M3 4v12c0 4 14 4 14 0V4" fill="#1850d0" stroke="#e8e020" stroke-width="1.500"/><path d="M7 5v13h3V5z" fill="#e8f8f8" stroke="none"/><path d="M3 4v12c0 4 14 4 14 0V4" stroke="#c8b800"/><ellipse cx="10" cy="4" rx="7" ry="3" fill="#b8e8f0" stroke="#d8c800" stroke-width="1.500"/>',
            hide: '<path d="M1 1h18v18H1z" fill="#78e0f0"/><path d="M5 8l4-5h7l-3 6z" fill="#f8f080" stroke="#806000"/><path d="M3 14l4-4h6l-3 7H5z" fill="#fff" stroke="#000"/>',
            swap: '<path d="M1 1h18v18H1z" fill="#68e8f8"/><path d="M3 14l4-4h6l-3 7H5z" fill="#fff" stroke="#000"/>',
            apply: '<path d="M2 13l4-3h13v6l-3 3H2zM2 13h14l3-3M16 13v6" fill="#fff" stroke="#000"/><circle cx="4" cy="4" r="3" fill="#38b8d8"/><path d="M8 2q7-3 9 3" stroke="#d0c000" stroke-width="2" stroke-dasharray="2 1"/><path d="M14 5h6l-3 4z" fill="#0020d0"/>',
            measure: '<path d="M2 5h16M5 2L2 5l3 3M15 2l3 3-3 3" stroke="#0020d0"/><path d="M1 12h18v6H1z" fill="#f8c8a8" stroke="#702808"/><path d="M4 12v3M7 12v3M10 12v3M13 12v3M16 12v3" stroke="#702808"/>',
            caliper: '<path d="M6 1h10v3h-2v10h2v5h-4v-3H8v-3h2V5H6z" fill="#68686c" stroke="#222"/><circle cx="6" cy="9" r="4" fill="#4ca8d8"/>',
            weight: '<path d="M5 7h10v10c0 3-10 3-10 0z" fill="#a08014" stroke="#4c3c00"/><path d="M7 8v9" stroke="#f0dc70"/><circle cx="10" cy="4" r="2.500" stroke="#4c3c00" stroke-width="1.500"/>',
            camera: '<path d="M0 5h4l1-2h3l1 2h2V3h5v2h4v11H0z" fill="#222" stroke="#000"/><path d="M1 7h18M1 7V5h4" stroke="#c8b060"/><circle cx="10" cy="11" r="4.500" fill="#e8e8f0"/><circle cx="10" cy="11" r="2" fill="#446"/>',
            update: '<circle cx="10" cy="10" r="8.500" stroke="#8e8e9a" stroke-width="2"/><path d="M5 11c0-7 9-7 9-1 0 4-5 4-5 1M15 9c0 8-9 8-10 4" stroke="#8e8e9a" stroke-width="2"/>',
            touch: '<circle cx="10" cy="10" r="8" stroke="#0a5a70" stroke-width="3"/><path d="M3 6q5-6 13-1" stroke="#f0e030" stroke-width="2"/><path d="M8 4h2l1 6 7 2v4l-2 3h-5l-5-8 2 1z" fill="#fff" stroke="#000"/>',
            axis: '<path d="M8 1v11h11M6 4l2-3 2 3M16 10l3 2-3 2"/><path d="M8 12l-7 7v-3m0 3h3" stroke="#b09010"/>',
            struct: '<path d="M1 1h18v18H1z" stroke="#fff" stroke-dasharray="1 1"/><path d="M6 3h5v3H6zM14 5h5v3h-5zM1 10h5v3H1zM8 9h5v3H8zM14 11h5v3h-5zM8 14h5v3H8zM14 16h5v3h-5z" fill="#a8f0f8" stroke="#0040d8"/><path d="M11 4h3M6 11h2" stroke="#00a0a8"/>',
            grid: '<path d="M4 1v18M8 1v18M12 1v18M16 1v18M1 4h18M1 8h18M1 12h18M1 16h18" stroke="#1838d8"/>',
            section: '<path d="M4 1h12v18H4z" fill="#48dce8" stroke="#006070"/><path d="M0 14h15l5-8H5z" stroke="#fff"/><path d="M4 5h12M4 16h12" stroke="#00606c"/>',
            solid: '<path d="M3 6l4-5h11v13l-4 5H3z" fill="#20c8d8" stroke="#000"/><path d="M3 6h11v13M14 6l4-5M7 6v9h7" stroke="#000"/>',
            link: '<path d="M1 3h7v4H1zM13 13h6v4h-6z" fill="#c8f0f8" stroke="#0040d8"/><path d="M4 7v3M11 15h2" stroke="#0040d8"/><path d="M11 6l-4 6h3l-3 7 6-8h-3l3-4z" fill="#c00c18" stroke="#a01020"/>',
            unlink: '<path d="M1 9C5 1 12 1 18 2M1 12h9l6-5M7 15h12v4H7M12 11h6M2 17l5-4" stroke="#a0a0ac" stroke-width="2"/>',
            insert: '<path d="M3 1v18M3 4h3M3 16h3" stroke="#0040d8"/><path d="M6 2h5v3H6zM6 14h5v4H6zM14 10h5v3h-5z" fill="#a8f0f8" stroke="#0040d8"/><path d="M13 11H6M8 9l-2 2 2 2" stroke="#000"/>',
            surface: '<path d="M1 7q5-8 9-4l-6 9z" stroke-dasharray="2 1"/><path d="M6 9q7-8 13 3v6q-3-3-6-2l-3 2v-4l-4-1z" fill="#fff020"/>',
            list: '<path d="M6 1h8v3H6zM6 6h8v3H6zM6 11h8v3H6zM6 16h8v3H6z" fill="#b0e8f0" stroke="#0040d8"/>',
            body: '<path d="M1 12L10 1l9 5-8 11z" fill="#d0e4ff" stroke="#0030d8"/><path d="M1 12v4l10 3 8-9V6" stroke="#0030d8"/><path d="M1 14l10 4 8-10" stroke="#20a8b8"/>',
            dimtable: '<path d="M1 3h12M1 0v6M13 0v6M17 7v12M14 7h6M14 19h6M1 9h10v10H1zM3 12h6M3 15h6" stroke="#8e8e9a"/>',
            dims: '<path d="M1 2h12M1 0v5M13 0v5" stroke="#000"/><path d="M14 7h6M17 7v12M14 19h6" stroke="#000"/><path d="M1 7h12v12H1z" fill="#40d8e8" stroke="#000"/><path d="M2 5h11M15 8v11" stroke="#e8e020" stroke-width="1.500"/>',
            text: '<text x="4" y="9" font-size="9" fill="#10105a" stroke="none" font-weight="bold">ABC</text><path d="M19 11H7l-6 6m0-4v4h4"/>',
            views: '<path d="M1 4l10-3 8 3v11l-4 3-10-3-4-4z" fill="#b8a8b4" stroke="#907088"/><path d="M8 5l11-1v10l-6 4-5-3z" fill="#d0a0a4" stroke="#a04848"/><path d="M3 7v10h6M3 17l6-6M8 18h5v-4" stroke="#1060f0" stroke-width="2"/>',
            analysis: '<path d="M2 5q8-6 10 2l-3 7-8 4z" fill="#60e0f8"/><path d="M12 7q1-6 7-4 1 6-5 10z" fill="#f8d8b0"/><path d="M1 19L18 1" stroke="#000"/><path d="M6 10h9M8 8l-2 2 2 2M13 8l2 2-2 2" stroke="#c00000" stroke-width="1.500"/><path d="M6 19h12" stroke="#008080"/>',
            workbench: '<path d="M1 3v17c6-6 12 2 18-9V1l-6 3z" fill="#d88848" stroke="none"/><path d="M1 2l6-1 4 6 7 0 1 4-6 4-2 1-8-6z" fill="#c8c8c8" stroke="#222"/><path d="M7 1l4 6-6 3M5 10l6 0 8 1M11 10v6" stroke="#222"/>',
            catalog: '<g stroke="#9a9aa6"><path d="M3 1v18M0 3h6M3 7h5v3H3zM3 13h5v3H3z" fill="#eee"/><path d="M11 4c0-4 8-4 8 0v12c0 3-8 3-8 0z" fill="#b8b8c4"/></g>',
            catalog2: '<g stroke="#9a9aa6"><path d="M1 1v18M1 3h5v4H1zM7 8h4v4H7zM2 8v6h5" fill="#eee"/><path d="M11 2h8v7h-8z" fill="#b8b8c4"/><path d="M11 15c0-5 8-4 7 0-1 5-6 4-5 0"/></g>',
            select: '<path d="M4 1v16l4-4 3 7 3-1-3-7h5z" fill="#ffff90"/><path d="M3 2v16" stroke="#00a0b0"/>',
            trap: '<path d="M7 1l2 2-2 2-2-2zM17 2l2 2-2 2-2-2zM4 12l2 2-2 2-2-2zM2 6l2 1-1 1-2-1zM12 5h2v2h-2zM1 17h1v1H1z" fill="#000" stroke="#000"/><path d="M9 8v9l2-2 2 4 2-1-2-4h3z" fill="#ffff90"/><path d="M8 8v9" stroke="#00a0b0"/>',
            sketcher: '<path d="M2 2h14v8H2z" fill="#fff"/><path d="M0 11h10v9H0z" fill="#fff" stroke="#000"/><path d="M2 14h6M2 17h6" stroke="#000" stroke-width="1.500"/><path d="M15 6l5 12H11z" fill="#fff" stroke="#000"/><path d="M9 12L15 1l2 1-6 11z" fill="#e8e070"/>',
            dot: '<path d="M8 8h3v3H8z" fill="#10105a"/><path d="M8 13h5V8" stroke="#50d8f0"/>',
            line: '<path d="M2 18L18 2" stroke-width="1.500"/><path d="M3 19L19 3" stroke="#50d8f0"/>',
            plane: '<path d="M1 15l7-8h11l-7 8z" fill="#ffe888" stroke="#3c3c18"/>',
            sweep: '<path d="M4 9q1-6 5-4t6-5" stroke="#008088"/><path d="M2 18q0-7 4-7h11l2 7q-3-3-6-2H7q-3 0-5 2z" fill="#60e0f8" stroke="#0030d0"/><path d="M4 14q3-2 13 0" stroke="#e8e020" stroke-width="2"/>',
            blend: '<path d="M3 3h12l4 3v8l-6-1z" fill="#189898" stroke="#0030d0"/><path d="M1 11q6-8 12-4l2 5-6 2-3 5q-1-5-5-3z" fill="#60e0f8" stroke="#0030d0"/><path d="M5 9q7-4 9 2" stroke="#e8e020" stroke-width="2"/>',
            loft: '<path d="M1 12l7-8q7-5 11 1v5l-8 8q-3-6-9-1z" fill="#60e0f8" stroke="#0030d0"/><path d="M4 9q6-4 9 5" stroke="#008088"/><path d="M8 5q6-2 9 4" stroke="#e8e020" stroke-width="2"/>',
            circle: '<circle cx="10" cy="10" r="8.500"/><circle cx="10.500" cy="10.500" r="7.500" stroke="#60d0f0" stroke-width=".7"/>',
            spline: '<path d="M6 3c6-5 16 3 10 8-3 3-7-3-11 0-2 1-2 3-2 6" stroke="#1840b0"/><path d="M5 2h2v2H5zM17 5h2v2h-2zM10 9h2v2h-2zM2 16h2v2H2z" fill="#0018d0" stroke="#0018d0"/>',
            curve: '<path d="M1 19h19" stroke="#000"/><path d="M1 15C5-1 10-2 14 5l5 8" stroke="#1840d0"/><path d="M1 18h6L19 5" stroke="#f0e800" stroke-width="2"/>',
            extrude: '<path d="M1 11q6 3 9 0t9 1v6q-5-4-9-1t-9-1z" fill="#d8f8ff" stroke="#20a0b0"/><path d="M2 14q5 2 8 0t9 1" stroke="#40d0e8" stroke-width="2"/><path d="M9 11l5-5-2-2 7-2-1 7-2-2-5 5z" fill="#ffe840" stroke="#b01818"/>',
            offset: '<path d="M1 6q9-9 18 0l-2 4q-7-6-14 0z" fill="#90e8f8" stroke="#0050d0"/><path d="M1 16q9-8 18 0l-4 4q-5-4-10 0z" fill="#108080" stroke="#004060"/><path d="M9 17V9H7l3-4 3 4h-2v8z" fill="#ffd020" stroke="#b01818"/>',
            join: '<path d="M4 8q8 0 15-6v11q-6 5-11 6z" fill="#50d8f0" stroke="#006070"/><path d="M4 8q8 0 15-6" stroke="#008080" stroke-width="3"/><path d="M1 7l5-5M2 2h4v4" stroke="#000"/>',
            dome: '<path d="M1 18V8q9-13 18 0v10q-9-6-18 0z" fill="#50e0f0" stroke="#00606c"/><path d="M3 12q2-7 7-8 5 1 7 8-7-5-14 0z" fill="#ffe820" stroke="#b01818"/><path d="M7 10l3-5 3 5z" fill="#fff" stroke="none"/>',
            dome2: '<path d="M2 7Q4 1 10 1q7 1 9 9v9q-3-6-8-6l-8 0z" fill="#50e0f0" stroke="#005060"/><path d="M2 8q2-6 8-6t8 8M4 14q1-6 7-5 6 0 7 9" stroke="#d0d000" stroke-width="2"/>',
            slab: '<path d="M1 6l9-5 9 3-6 5zM3 16l8-6 8 2-9 7z" fill="#30c0d0" stroke="#0040a0"/><path d="M1 8q6-2 9-3l8 3v4l-11 4z" fill="#fff020" stroke="#706000"/>',
            burn: '<path d="M1 7q8-7 13 4v7q-5-9-12-6z" fill="#f0d870" stroke="#7c2020" stroke-dasharray="2 1"/><path d="M12 5l8 9v4l-7-7z" fill="#000"/><path d="M6 5q5 0 8 8" stroke="#000"/><path d="M2 3h1M5 1h1M10 2h1M15 3h1M3 16h1M6 18h1" stroke="#c01010"/>',
            push: '<path d="M1 18q0-8 5-8h9l4 8q-9-6-18 0z" fill="#50e0f0" stroke="#00606c"/><path d="M6 14l4-6 4 6z" fill="#ffe820" stroke="#2020c0"/><path d="M10 6V0M8 2l2-2 2 2" stroke="#000"/>',
            thick: '<path d="M4 10l10-9 5 5v4l-9 9-8-6z" fill="#38d0d8" stroke="#004050"/><path d="M3 12l7 4 9-9" stroke="#fff"/><path d="M1 8l9-4 8 2-8 8z" fill="#d8d878" stroke="#404010"/><path d="M2 13v4h4" stroke="#000"/>',
            thick2: '<path d="M4 10l10-9 5 5v4l-9 9-8-6z" fill="#38d0d8" stroke="#004050"/><path d="M3 12l7 4 9-9" stroke="#fff"/><path d="M2 8l9-4 8 2-8 8z" fill="#ffe880" stroke="#404010"/><path d="M1 8v12M4 10v9" stroke="#c02010"/>',
            fold: '<path d="M1 6l6-5 5 5 7 4-8 6-7-3z" fill="#48d8e8" stroke="#005878"/><path d="M6 8l13 2M8 12l7 6h3M10 3h6M14 1l2 2-2 2" stroke="#000"/>',
            heal: '<path d="M0 4l10-1 10-2v17L10 5 0 19z" fill="#38b4bc" stroke="#0040d8"/><path d="M9 5l-3 9M11 5l4 9" stroke="#ffe820" stroke-width="2.500"/>',
            split: '<path d="M1 13q5-6 16-5l-7 11q-2-6-9-2z" fill="#40d8f0" stroke="#0030d0"/><path d="M1 4l11-3h7v6h-8z" fill="#fff8c8" stroke="#000"/><path d="M14 3h3v3h-3z" stroke="#000"/><path d="M5 12q5-3 8 1" stroke="#e8e020" stroke-width="2"/>',
            boundary: '<path d="M1 13C2 1 18 1 19 13q-9-5-18 0z" fill="#58e0f0" stroke="#006070"/><path d="M1 14q9-5 18 0" stroke="#f0e000" stroke-width="2.500"/>',
            fillet: '<path d="M1 6l6-5q12 2 12 13l-5 5Q14 9 6 8z" fill="#ffe8b8" stroke="#000"/><path d="M6 3q9 1 9 14M1 6q6 0 10 4" stroke="#b81c20"/>',
            translate: '<path d="M1 6l6-5v13l-6 5z" fill="#80d8e8" stroke="#0040a0" stroke-dasharray="1 1"/><path d="M7 7l6-5v12l-6 5z" fill="#f8f890" stroke="#008080"/><path d="M13 8l6-5v12l-6 4z" fill="#40d8f0"/>',
            extrapolate: '<path d="M1 13l8-9q7-3 10 3l-8 11q-4-6-10-1z" fill="#40d8f0" stroke="#000"/><path d="M7 6l7-4q5 1 4 6l-5 4q-1-5-6-6z" fill="#fff020" stroke="#000"/><path d="M14 5l5-5M16 1h3v3" stroke="#000"/>',
            pad: '<path d="M1 14l5-5h13v4l-5 6H1z" fill="#9038e8" stroke="#30086c"/><path d="M5 10h12M3 12h12M1 14h13l5-5" stroke="#fff"/><path d="M9 10l5-5-2-1 7-3-2 7-1-1-5 5z" fill="#ffe820" stroke="#403000"/>',
            revolve: '<path d="M10 1h5q5 1 4 5h-9zM10 6h4v5h-4zM10 11h7q3 2 2 6-5 3-9 2z" fill="#9038e0" stroke="#30086c"/><path d="M10 1Q1 1 1 6h8M10 11Q1 10 1 15q2 4 8 4" stroke="#888"/><path d="M0 9l5 1V8l4 3-4 3v-2l-5-1z" fill="#ffe820" stroke="#000"/>',
            multi3: '<path d="M1 14l4-8q6-9 9 0l5 3v5l-5 5H1z" fill="#9038e0" stroke="#30086c"/><path d="M1 14h13l5-5v5l-5 5H1z" fill="#c890f8" stroke="#30086c"/><path d="M8 3q-3 6-3 9" stroke="#d8a8ff"/>',
            rib: '<path d="M1 14l4-3 8-9h3l-6 9h9v4l-5 4H1z" fill="#b070f8" stroke="#30086c"/><path d="M1 15h13l5-4M13 2l-7 12" stroke="#30086c"/>',
            stack: '<path d="M1 12q5 4 9 1t9 0v4q-5 5-9 1t-9 0zM1 8q5 4 9 1t9 0v4q-5 4-9 1t-9 0z" fill="#9030d8" stroke="#200850"/><path d="M1 3q5 4 9 0t9 0v6q-5 4-9 1T1 9z" fill="#48d8f0" stroke="#004060"/>',
            cyl: '<path d="M2 12L11 3q8-3 8 4l-9 11q-9 2-8-6z" fill="#48e0f8" stroke="#000"/><path d="M1 13q4-4 8 1l-1 4q-6 2-7-5z" fill="#9828e8" stroke="#000"/>',
            prism: '<path d="M2 17L4 4l7 3v12z" fill="#8828f0" stroke="#000"/><path d="M11 7l7-3v12l-7 3z" fill="#186878" stroke="#000"/><path d="M4 4l6-3 8 3-7 3z" fill="#48d8f0" stroke="#000"/>',
            shellsolid: '<path d="M1 17L8 2l8 1 3 5-5 11z" fill="#20a8c8" stroke="#000"/><path d="M1 17L7 4l6 2-5 13z" fill="#8828f0" stroke="#000"/><path d="M9 17l5-11 3 2-4 9z" fill="#10105a"/>',
            repeat: '<path d="M1 11C1 1 13-2 15 6h4v6l-8-3 2-1C11 3 6 4 5 12z" fill="#40c8e0" stroke="#004068"/><text x="6" y="18" font-size="8" fill="#0020d0" stroke="none">xN</text>',
            pattern: '<path d="M4 2v16M10 2v16M16 2v16M2 4h16M2 10h16M2 16h16" stroke="#2030d0" stroke-dasharray="2 1"/><g fill="#fff" stroke="#1828d0"><circle cx="4" cy="4" r="1.500"/><circle cx="10" cy="4" r="1.500"/><circle cx="16" cy="4" r="1.500"/><circle cx="4" cy="10" r="1.500"/><circle cx="10" cy="10" r="1.500"/><circle cx="16" cy="10" r="1.500"/><circle cx="4" cy="16" r="1.500"/><circle cx="10" cy="16" r="1.500"/><circle cx="16" cy="16" r="1.500"/></g>',
            clipboard: '<path d="M1 3h14v12H1z" fill="#c0b060" stroke="#403800"/><path d="M5 1h6v3H5z" fill="#f0f0c0" stroke="#403800"/><path d="M6 6h12v10H6z" fill="#ffe8b0" stroke="#604000"/><path d="M9 13q0-4 3-2t4-3" stroke="#d00000"/><path d="M8 19l4-3h7l-3 3z" fill="#40d0e0"/>',
            powercopy: '<path d="M1 2l8-1 3 10h7l-3 3H5z" fill="#ffe880" stroke="#403800"/><path d="M1 14l5-3h13v3l-5 5H1z" fill="#f8e888" stroke="#403800"/><path d="M8 13L18 4" stroke="#1850d0" stroke-width="2"/>'
        };

        // "|" handle, "-" divider, trailing "*" fly-out arrow, trailing "." narrow slot
        document.querySelectorAll('[data-tools]').forEach(bar => {
            const col = bar.dataset.dir === 'col';
            bar.innerHTML = bar.dataset.tools.split(' ').map((item, i) => {
                if (item === '|') {
                    if (col) {
                        return `<span class="w-[17px] h-[3px] shrink-0 ml-[3px] mb-[5px] border-t-2 border-white bg-[#8a8a98] ${i ? 'mt-[10px]' : 'mt-[4px]'}"></span>`;
                    }
                    return `<span class="w-[3px] h-[17px] shrink-0 mr-[7px] border-l-2 border-white bg-[#8a8a98] ${i ? 'ml-[9px]' : ''}"></span>`;
                }
                if (item === '-') {
                    return '<span class="h-[2px] shrink-0 my-[2px] border-t border-[#9a9aac] bg-white"></span>';
                }
                const name = item.replace(/[*.]/, '');
                const arrow = item.endsWith('*');
                let size = 'w-7 h-7 pl-1';
                if (arrow) size = 'w-[30px] h-[30px] pl-1';
                if (item.endsWith('.')) size = 'w-[22px] h-7 pl-px';
                return `<button aria-label="${name}" class="${size} ${col ? 'ml-1' : ''} shrink-0 flex items-start pt-1">
                    <svg viewBox="0.500 0.500 20 20" class="size-5 shrink-0 overflow-visible" fill="none" stroke="#10105a" stroke-width="1" shape-rendering="crispEdges">${icons[name]}</svg>
                    ${arrow ? '<svg viewBox="0 0 6 4" class="w-[6px] h-1 shrink-0 mt-[21px]"><path d="M0 0h6L3 4z"/></svg>' : ''}
                </button>`;
            }).join('');
        });

        const treeIcons = {
            part: '<path d="M6 0h7v12H8z" fill="#fff"/><path d="M10 0h3v4z" fill="#30c8e0"/><circle cx="4" cy="9" r="3" fill="none" stroke="#f0e080" stroke-width="3" stroke-dasharray="2 1"/>',
            plane: '<path d="M1 10l4-6h9l-4 6z" fill="#fff090"/><path d="M1 11h9l4-6" fill="none" stroke="#10a0a8"/>',
            body: '<circle cx="7" cy="7" r="4.500" fill="#104858" stroke="#20c8e0" stroke-width="3" stroke-dasharray="2 1.500"/><path d="M4 4l6 6M10 4l-6 6" stroke="#f0e040" stroke-width="1.500"/>',
            pad: '<path d="M4 1h9v12H4z" fill="#fff" stroke="#10105a"/><path d="M1 7l4-1 3-3v5l-3 3-4 1z" fill="#ffe880" stroke="#10105a"/>',
            pocket: '<path d="M2 1h12v11" fill="none" stroke="#333"/><path d="M2 3h9v9H2z" fill="#10105a" stroke="#fff098" stroke-width="2"/><path d="M5 5h2v2h2v3" fill="none" stroke="#cfcfe5"/>',
            sketch: '<path d="M0 1h14M0 3h14M0 5h14M0 7h14M0 9h14M0 11h14M0 13h14" stroke="#d0d0e0" stroke-dasharray="1 1"/><path d="M3 10l3-3 2 2 4-6" fill="none" stroke="#fff"/>',
            fillet: '<path d="M4 1l6-1 4 4v5l-3 3z" fill="#80808c"/><path d="M1 4l5 1 2 8-3-1-4-3z" fill="#20a0a8" stroke="#000"/><path d="M4 4l5-2 4 2-2 6-2 2-2-7z" fill="#ffe890"/><path d="M5 4l3 2 1 6M9 2l4 2" fill="none" stroke="#900"/>',
            shell: '<path d="M1 10L5 1h4l-3 11z" fill="#30a8c0"/><path d="M5 11L8 2l5 1-3 9z" fill="#10105a" stroke="#fff090"/>',
            radius: '<path d="M4 1h10l-3 4H1z" fill="#f0b898" stroke="#000"/><path d="M11 5l3-4v9l-3 3z" fill="#10a0a8"/><path d="M1 5h10v9H1z" fill="#c8b860" stroke="#000"/><path d="M3 8h3M3 11h3M8 7h2v4H8z" fill="none" stroke="#000"/>'
        };
        // label, icon, depth, node sign, true when the branch ends at the row
        const rows = [
            ['ozgur_kese1_himic001', 'part', 0, ''],
            ['xy plane', 'plane', 1, ''], ['yz plane', 'plane', 1, ''], ['zx plane', 'plane', 1, ''],
            ['PartBody', 'body', 1, '-', true],
            ['Pad.1', 'pad', 2, '+'], ['Pocket.1', 'pocket', 2, '+'], ['Pocket.2', 'pocket', 2, '-'],
            ['Sketch.3', 'sketch', 3, '+', true],
            ['EdgeFillet.1', 'fillet', 2, '+'], ['EdgeFillet.2', 'fillet', 2, '+'], ['EdgeFillet.3', 'fillet', 2, '+'],
            ['EdgeFillet.4', 'fillet', 2, '+'], ['EdgeFillet.5', 'fillet', 2, '+'], ['EdgeFillet.6', 'fillet', 2, '+'],
            ['EdgeFillet.7', 'fillet', 2, '+'], ['Shell.1', 'shell', 2, '+'], ['EdgeFillet.8', 'fillet', 2, '+'],
            ['EdgeFillet.9', 'fillet', 2, '-'], ['Radius', 'radius', 3, '', true],
            ['Pocket.3', 'pocket', 2, '-', true], ['Sketch.4', 'sketch', 3, '+', true]
        ];
        document.getElementById('tree').innerHTML = rows.map(([label, icon, depth, sign, last], i) => {
            const x = depth ? 6 + (depth - 1) * 14 : 0;
            let lines = '';
            if (depth) {
                lines += `M${x} 0V${last ? 8 : 19}M${x} 8h9`;
                if (depth === 3 && i < 20) lines += 'M20 0v19';
            } else {
                lines += 'M6 10v9';
            }
            const next = rows[i + 1];
            if (depth && next && next[2] > depth) lines += `M${x + 14} 12v7`;
            const width = depth ? x + 9 : 1;
            const node = sign ? `<circle cx="${x}" cy="8" r="4" fill="#9a9a9a"/><path d="M${x - 3} 8h6${sign === '+' ? `M${x} 5v6` : ''}" stroke="#000" stroke-width="1.500"/>` : '';
            return `<li class="h-[19px] flex items-center">
                <svg class="h-[19px] shrink-0 overflow-visible" style="width:${width}px"><path d="${lines}" stroke="#fff" stroke-width="2" fill="none"/>${node}</svg>
                <svg viewBox="0 0 15 15" class="size-[15px] shrink-0 -mt-1 relative" shape-rendering="crispEdges">${treeIcons[icon]}</svg>
                <span class="px-[2px] leading-[15px] rounded-sm bg-[#333366] ${label === 'Shell.1' ? 'underline' : ''}">${label}</span>
            </li>`;
        }).join('');

        // pinned icons and running windows; entries with a title are windows
        const tasks = [
            ['AIMP', '<circle cx="8" cy="8" r="6.500" fill="#f0a020" stroke="#201408" stroke-width="2"/><path d="M5 10l3-5 3 5z" fill="none" stroke="#201408" stroke-width="1.500"/>'],
            ['Internet Explorer', '<path d="M13 10c-2 6-11 4-10-2 1-7 11-6 10 1H5" fill="none" stroke="#48b8f0" stroke-width="3"/><path d="M1 14C-1 10 8 1 14 1c2 0 1 2 0 3" fill="none" stroke="#f8c838" stroke-width="1.500"/>'],
            ['Explorer', '<path d="M2 2l5-1v13l-5 1z" fill="#f8e8a0"/><path d="M6 3l7-1v12l-6 2z" fill="#e8c860"/><path d="M9 5l2-1v9l-2 1z" fill="#fff8d8"/>', 'ozgur_kese1_himic'],
            ['Media Player', '<path d="M1 1h14v14H1z" fill="#b8dcf4" stroke="#5898c8"/><circle cx="8" cy="8" r="5.500" fill="#f08018"/><path d="M6 5l5 3-5 3z" fill="#fff"/>'],
            ['Dreamweaver', '<path d="M.500.500h15v15H.500z" fill="#0c2c08" stroke="#88d828"/><text x="1" y="11.500" font-size="9" fill="#98e830">Dw</text>'],
            ['Chrome', '<circle cx="8" cy="8" r="7.500" fill="#f8c820"/><path d="M8 8L1 5C4-1 12-1 15 5H8z" fill="#e03828"/><path d="M1 5l5 6 1 4.500C1 15-1 9 1 5z" fill="#38a848"/><circle cx="8" cy="8" r="3.500" fill="#4888e8" stroke="#fff"/>', 'Kral Müzik – Kralmuz...'],
            ['Firefox', '<circle cx="8" cy="8" r="7" fill="#2868b0"/><path d="M2 3C-1 10 4 16 10 15c6-2 7-8 4-12 1 5-2 8-5 8-4 0-5-4-3-6-2 0-3-1-4-2z" fill="#f07818"/><path d="M4 11q4 4 9 0" stroke="#ffd040" fill="none"/>'],
            ['Device tools', '<path d="M1 1h6v8H1z" fill="#f8c838"/><path d="M8 1h7v7M2 11v4h5" fill="none" stroke="#50d020" stroke-dasharray="1 1"/><path d="M6 15l7-8M7 8l7 7M5 9l4-3" stroke="#d0d8e0" stroke-width="2"/>'],
            ['Game', '<path d="M0 0h16v16H0z" fill="#4c4c28"/><path d="M2 3h3v4H2zM7 2h3v4M12 3h2v4M2 14l2-5 2 4 2-4 1 5M11 14l2-5 1 5" fill="none" stroke="#e8e8d8"/>'],
            ['Notepad', '<path d="M2 2h12v13H2z" fill="#f4f8e8" stroke="#888"/><path d="M4 6h7M4 9h7M4 12h6" stroke="#78c028"/><path d="M7 12L14 1l2 1-7 11z" fill="#f08818"/><path d="M2 2h12" stroke="#444" stroke-width="2" stroke-dasharray="1 1"/>'],
            ['Sync', '<path d="M2 9c3 3 9 2 12-4 2 6-2 10-6 10s-6-3-6-6z" fill="#38c868"/><path d="M1 8C0 2 6 0 11 2 9 5 5 6 1 8z" fill="#d8f8f8"/><path d="M8 4l5-2 1 3-5 3z" fill="#30a8b8"/>'],
            ['Thunderbird', '<circle cx="8" cy="8" r="7" fill="#2860a8"/><path d="M4 7h8v6H5z" fill="#e8f0f8"/><path d="M1 5c4-6 12-5 14 2-4-3-8-3-14-2z" fill="#68a8e0"/><path d="M4 7l4 3 4-3" stroke="#888" fill="none"/>'],
            ['CCleaner', '<path d="M13 4C6-1 2 5 5 9c2 4 6 4 9 2" fill="none" stroke="#d02820" stroke-width="3.500"/><path d="M2 9l5-2 3 3-3 6H1z" fill="#f0b070"/><path d="M9 7l3-3" stroke="#5878a8" stroke-width="2"/>'],
            ['Sublime Text', '<rect x="1" y="2" width="14" height="12" rx="1" fill="#484848" stroke="#c8c8c8"/><path d="M11 5H6v3h4v3H5" fill="none" stroke="#f09020" stroke-width="1.500"/>'],
            ['CATIA', '<use href="#catia"/>', 'CATIA V5 - [ozgur_k...', true],
            ['Paint', '<path d="M8 3c-7 0-9 5-7 9 3 3 5-1 7 0 3 3 6 1 6-3 0-3-2-6-6-6z" fill="#c8e4f4" stroke="#6898b8"/><circle cx="4" cy="8" r="1.500" fill="#e03020"/><circle cx="7" cy="6" r="1.500" fill="#30a030"/><circle cx="10" cy="8" r="1.500" fill="#e8c020"/><path d="M13 1v14" stroke="#e07818" stroke-width="2"/>', 'Adsız - Paint']
        ];
        document.getElementById('tasks').innerHTML = tasks.map(([name, art, title, active]) => {
            const svg = `<svg viewBox="0 0 16 16" class="size-4 shrink-0">${art}</svg>`;
            if (!title) return `<button aria-label="${name}" class="w-[42px] flex items-center justify-center">${svg}</button>`;
            const tone = active ? 'border-[#c8ccd8] bg-linear-to-b from-[#b0b2be] to-[#7c7e8c]' : 'border-[#7c8598] bg-linear-to-b from-[#6b7386] to-[#343c50]';
            return `<button class="w-[158px] flex items-center gap-[5px] pl-[9px] border rounded-[3px] whitespace-nowrap ${tone}">${svg}${title}</button>`;
        }).join('');

        const radius = document.getElementById('radius');
        radius.focus();
        radius.select();
    </script>
</body>
</html>
